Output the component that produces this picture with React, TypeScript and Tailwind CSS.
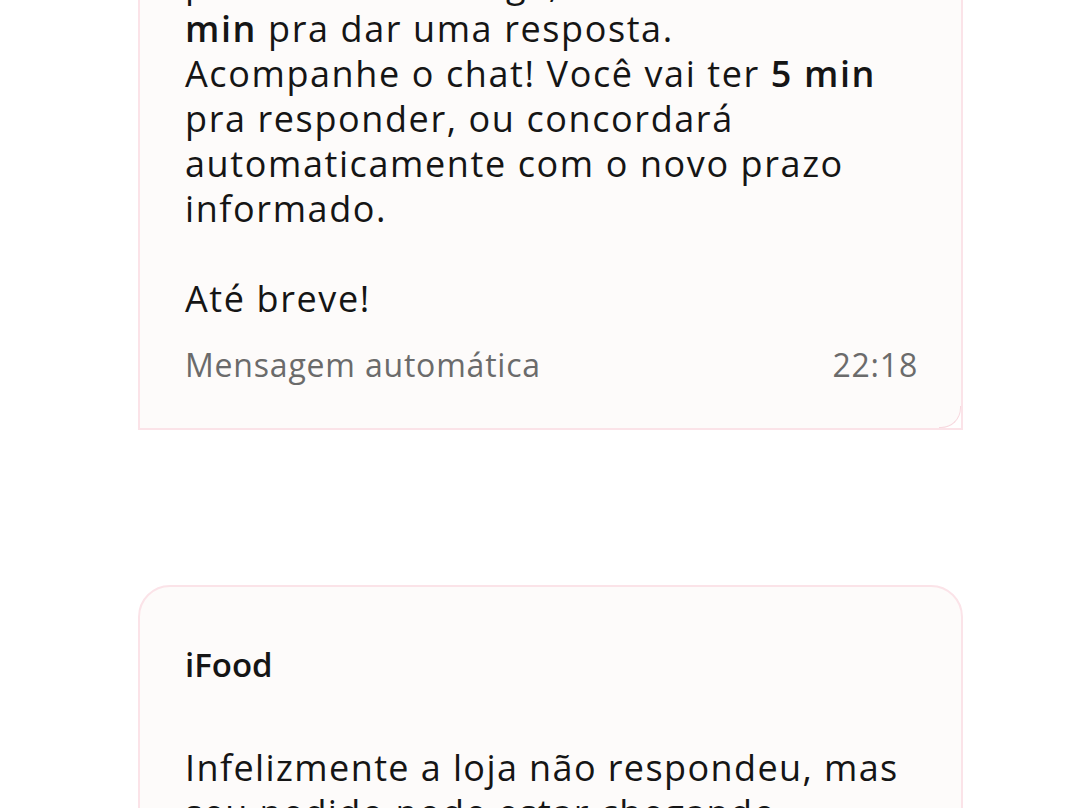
import React from "react";

const font = { fontFamily: "'Open Sans', 'Noto Sans', sans-serif" };

export default function App() {
  return (
    <div className="h-[808px] w-[1080px] overflow-hidden bg-white text-[#151515]" style={font}>
      <div className="ml-[138px] mt-[-81px] w-[825px]">
        <div className="relative rounded-t-[32px] border-2 border-[#fbe3e8] bg-[#fdfbfa] pl-[45px] pr-[43px] pt-[40px] pb-[41px]">
          <div className="text-[36px] leading-[45px] tracking-[1.6px]">
            <div className="whitespace-nowrap">
              previsão de entrega, e ela tem até <b className="font-semibold">5</b>
            </div>
            <div className="whitespace-nowrap">
              <b className="font-semibold">min</b> pra dar uma resposta.
            </div>
            <div className="whitespace-nowrap">
              Acompanhe o chat! Você vai ter <b className="font-semibold">5 min</b>
            </div>
            <div className="whitespace-nowrap">pra responder, ou concordará</div>
            <div className="whitespace-nowrap">automaticamente com o novo prazo</div>
            <div className="whitespace-nowrap">informado.</div>
            <div className="h-[45px]" />
            <div className="whitespace-nowrap">Até breve!</div>
          </div>
          <div className="mt-[21px] flex items-center justify-between text-[32px] leading-[45px] tracking-[0.8px] text-[#6b6b6b]">
            <span>Mensagem automática</span>
            <span>22:18</span>
          </div>
          <div className="absolute bottom-0 right-0 h-[22px] w-[22px] bg-white">
            <div className="h-full w-full rounded-br-[20px] border-b border-r border-[#f7d9df] bg-[#fdfbfa]" />
          </div>
        </div>

        <div className="mt-[155px] rounded-t-[32px] border-2 border-[#fbe3e8] bg-[#fdfbfa] px-[45px] pt-[55px] pb-[40px]">
          <div className="text-[33px] font-semibold leading-[45px]">iFood</div>
          <div className="mt-[58px] text-[36px] leading-[45px] tracking-[1.4px]">
            <div className="whitespace-nowrap">Infelizmente a loja não respondeu, mas</div>
            <div className="whitespace-nowrap">seu pedido pode estar chegando.</div>
            <div className="whitespace-nowrap">Acompanhe o status do pedido.</div>
          </div>
        </div>
      </div>
    </div>
  );
}
